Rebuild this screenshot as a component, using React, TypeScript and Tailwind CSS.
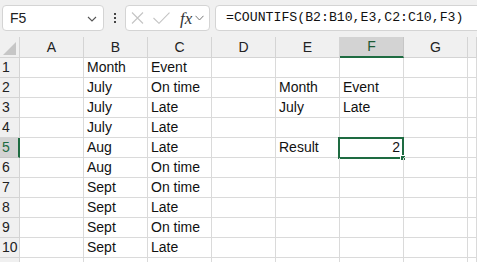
import React from "react";

const cols = ["A", "B", "C", "D", "E", "F", "G", ""];
type Cell = { t: string; right?: boolean };
const data: Record<string, Cell> = {
  "1B": { t: "Month" },
  "1C": { t: "Event" },
  "2B": { t: "July" },
  "2C": { t: "On time" },
  "3B": { t: "July" },
  "3C": { t: "Late" },
  "4B": { t: "July" },
  "4C": { t: "Late" },
  "5B": { t: "Aug" },
  "5C": { t: "Late" },
  "6B": { t: "Aug" },
  "6C": { t: "On time" },
  "7B": { t: "Sept" },
  "7C": { t: "On time" },
  "8B": { t: "Sept" },
  "8C": { t: "Late" },
  "9B": { t: "Sept" },
  "9C": { t: "On time" },
  "10B": { t: "Sept" },
  "10C": { t: "Late" },
  "2E": { t: "Month" },
  "2F": { t: "Event" },
  "3E": { t: "July" },
  "3F": { t: "Late" },
  "5E": { t: "Result" },
  "5F": { t: "2", right: true },
};

const font = { fontFamily: '"Liberation Sans", Arial, sans-serif' };

export default function App() {
  const rows = Array.from({ length: 11 }, (_, i) => i + 1);
  return (
    <div
      className="w-[477px] h-[262px] overflow-hidden bg-white relative"
      style={font}
    >
      {/* toolbar */}
      <div className="h-[37px] bg-[#f0f0f0] flex items-start pt-[5px] pl-[2px] overflow-hidden">
        <div className="shrink-0 w-[102px] h-[26px] bg-white border border-[#d4d4d4] rounded-[4px] flex items-center justify-between pl-[7px] pr-[6px]">
          <span className="text-[14px] text-[#222]">F5</span>
          <svg width="10" height="6" viewBox="0 0 10 6" className="mt-[1px]">
            <path d="M1 1 L5 5 L9 1" fill="none" stroke="#555" strokeWidth="1.1" />
          </svg>
        </div>
        <div className="shrink-0 w-[21px] h-[26px] flex flex-col items-center justify-center gap-[2px]">
          <div className="w-[2px] h-[2px] bg-[#444]" />
          <div className="w-[2px] h-[2px] bg-[#444]" />
          <div className="w-[2px] h-[2px] bg-[#444]" />
        </div>
        <div className="shrink-0 w-[85px] h-[26px] bg-white border border-[#d4d4d4] rounded-[4px] flex items-center pl-[5px]">
          <svg width="13" height="12" viewBox="0 0 13 12" className="shrink-0">
            <path d="M1 0.5 L12 11.5 M12 0.5 L1 11.5" stroke="#c4c4c4" strokeWidth="1.1" />
          </svg>
          <svg width="17" height="12" viewBox="0 0 17 12" className="ml-[9px] shrink-0">
            <path d="M0.5 6 L6 11.3 L16.5 0.7" fill="none" stroke="#c4c4c4" strokeWidth="1.1" />
          </svg>
          <span
            className="ml-[10px] text-[17px] italic text-[#333] leading-none"
            style={{ fontFamily: '"Liberation Serif", "Times New Roman", serif' }}
          >
            fx
          </span>
          <svg width="9" height="6" viewBox="0 0 9 6" className="ml-[3px] shrink-0">
            <path d="M0.5 0.8 L4.5 5 L8.5 0.8" fill="none" stroke="#777" strokeWidth="1" />
          </svg>
        </div>
        <div className="shrink-0 ml-[5px] w-[280px] h-[26px] bg-white border border-[#d4d4d4] rounded-[4px] flex items-center pl-[10px]">
          <span
            className="text-[13.2px] text-[#111] whitespace-nowrap"
            style={{ fontFamily: '"Liberation Mono", "DejaVu Sans Mono", monospace' }}
          >
            =COUNTIFS(B2:B10,E3,C2:C10,F3)
          </span>
        </div>
      </div>

      {/* grid */}
      <div
        className="grid"
        style={{ gridTemplateColumns: "20px repeat(7, 64px) 1fr" }}
      >
        {/* header row */}
        <div className="h-[21px] bg-[#f0f0f0] border-r border-b border-[#d4d4d4] relative">
          <svg width="14" height="14" viewBox="0 0 14 14" className="absolute left-[3px] top-[5px]">
            <polygon points="13,0 13,13 0,13" fill="#c6c6c6" />
          </svg>
        </div>
        {cols.map((c, i) => {
          const sel = c === "F";
          return (
            <div
              key={i}
              className={
                "h-[21px] flex items-center justify-center text-[14px] border-r " +
                (sel
                  ? "bg-[#d3d3d3] border-[#c6c6c6] border-b-2 border-b-[#1e6b41] text-[#1d5a36]"
                  : "bg-[#f0f0f0] border-[#d4d4d4] border-b border-b-[#d4d4d4] text-[#222]")
              }
            >
              {c}
            </div>
          );
        })}
        {rows.map((r) => (
          <React.Fragment key={r}>
            <div
              className={
                "h-[20px] flex items-center pl-[2px] text-[14px] border-b " +
                (r === 5
                  ? "bg-[#d3d3d3] border-b-[#c6c6c6] border-r-2 border-r-[#1e6b41] text-[#1e6b41]"
                  : "bg-[#f0f0f0] border-b-[#d4d4d4] border-r border-r-[#d4d4d4] text-[#222]")
              }
            >
              {r <= 10 ? r : ""}
            </div>
            {cols.map((c, i) => {
              const cell = data[`${r}${c}`];
              const sel = r === 5 && c === "F";
              return (
                <div
                  key={i}
                  className={
                    "h-[20px] border-r border-b border-[#dadada] flex items-center text-[14px] text-[#111] whitespace-nowrap px-[3px] relative " +
                    (cell?.right ? "justify-end" : "justify-start")
                  }
                >
                  {cell?.t}
                  {sel && (
                    <div className="absolute left-[-2px] top-[-1px] right-[-1px] bottom-[-2px] border-2 border-[#1e6b41]">
                      <div className="absolute right-[-4px] bottom-[-4px] w-[6px] h-[6px] bg-[#1e6b41] border border-white" />
                    </div>
                  )}
                </div>
              );
            })}
          </React.Fragment>
        ))}
      </div>
    </div>
  );
}
